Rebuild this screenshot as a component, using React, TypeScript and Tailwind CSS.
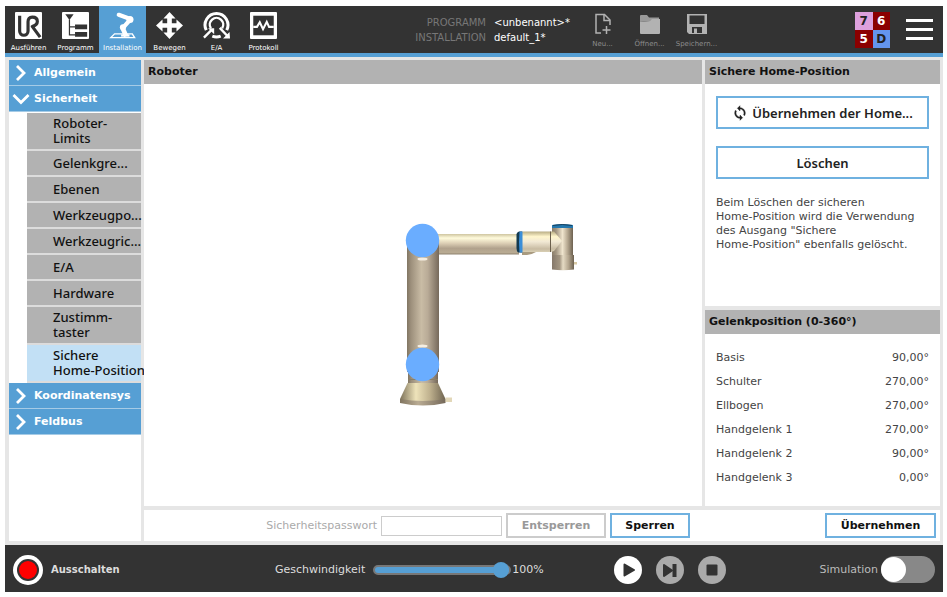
import type { ReactNode } from "react";

const tabs: { label: string; icon: ReactNode; active?: boolean }[] = [
  {
    label: "Ausführen",
    icon: (
      <>
        <rect width="29" height="29" rx="1" fill="#fff" />
        <path
          d="M5 4V20.5A4.5 4.5 0 0 0 14 20.5V10.5Q14 5.5 18.5 5.5Q24 5.5 24 10.2Q24 14 18.5 15.5L27 27"
          fill="none"
          stroke="#333"
          strokeWidth="3.4"
          strokeLinejoin="round"
        />
      </>
    ),
  },
  {
    label: "Programm",
    icon: (
      <>
        <rect width="29" height="29" rx="1" fill="#fff" />
        <path d="M3.5 2.5H12.5L8 8.5z" fill="#333" />
        <path d="M8 8V24.5H14M8 16H14" fill="none" stroke="#333" strokeWidth="1.3" />
        <path d="M14 13.5H27V18.5H14zM14 21.5H27V26.5H14z" fill="#333" />
      </>
    ),
  },
  {
    label: "Installation",
    active: true,
    icon: (
      <>
        <path d="M6 23.5H25L27.5 27.5H2z" fill="none" stroke="#fff" strokeWidth="1.5" />
        <path d="M10.5 3L20 6.5" stroke="#fff" strokeWidth="4.5" strokeLinecap="round" />
        <path d="M23 8L15 17" stroke="#fff" strokeWidth="4.5" strokeLinecap="round" />
        <path d="M14.5 17L18.5 26" stroke="#fff" strokeWidth="5" />
        <circle cx="22.5" cy="8" r="3.8" fill="#fff" />
        <circle cx="15" cy="16.5" r="3.3" fill="#fff" />
        <path d="M13 24H22V26.5H13z" fill="#fff" />
      </>
    ),
  },
  {
    label: "Bewegen",
    icon: (
      <path
        d="M14.5 0L21 7H17V12H22V8L29 14.5L22 21V17H17V22H21L14.5 29L8 22H12V17H7V21L0 14.5L7 8V12H12V7H8z"
        fill="#fff"
      />
    ),
  },
  {
    label: "E/A",
    icon: (
      <>
        <path
          d="M3.5 19.5A12.3 12.3 0 1 1 25.5 19.5M10 26a12 12 0 0 0 9 0"
          fill="none"
          stroke="#fff"
          strokeWidth="3.2"
        />
        <path d="M8.5 17.5A7.2 7.2 0 1 1 20.5 17.5" fill="none" stroke="#fff" strokeWidth="2.6" />
        <path d="M1 27.5L9 19.5M18 17L26 25.5" stroke="#fff" strokeWidth="2.6" />
        <path d="M5.5 17.5H12V24zM29 28.5H21.5L28.5 21.5z" fill="#fff" />
      </>
    ),
  },
  {
    label: "Protokoll",
    icon: (
      <>
        <rect width="29" height="29" rx="1" fill="#fff" />
        <rect x="3.5" y="4" width="22" height="21" fill="#333" />
        <path
          d="M3.5 16H7.5L10.5 11L14 18.5L18 10.5L20.5 16H25.5"
          fill="none"
          stroke="#fff"
          strokeWidth="2.2"
        />
      </>
    ),
  },
];

const safetyItems = [
  { label: "Roboter-\nLimits", tall: true },
  { label: "Gelenkgre..." },
  { label: "Ebenen" },
  { label: "Werkzeugpo..." },
  { label: "Werkzeugric..." },
  { label: "E/A" },
  { label: "Hardware" },
  { label: "Zustimm-\ntaster", tall: true },
  { label: "Sichere\nHome-Position", tall: true, active: true },
];

const joints = [
  ["Basis", "90,00°"],
  ["Schulter", "270,00°"],
  ["Ellbogen", "270,00°"],
  ["Handgelenk 1", "270,00°"],
  ["Handgelenk 2", "90,00°"],
  ["Handgelenk 3", "0,00°"],
];

function NavGroup({ label, open = false }: { label: string; open?: boolean }) {
  return (
    <button
      aria-expanded={open}
      className="flex h-[26px] w-full items-center border-b border-[#a5cbe6] bg-[#569fd4] pl-[3px] text-left font-bold text-white"
    >
      <svg viewBox="0 0 18 18" className="mr-1 size-[18px] shrink-0" fill="none" stroke="#fff" strokeWidth="2.8">
        <path d={open ? "M1.5 5L9 12.5L16.5 5" : "M5 2L12 9L5 16"} />
      </svg>
      {label}
    </button>
  );
}

function PanelTitle({ children }: { children: ReactNode }) {
  return (
    <h2 className="flex h-6 shrink-0 items-center bg-[#b2b2b2] pl-1 font-bold text-[#111]">{children}</h2>
  );
}

function FileButton({ label, children }: { label: string; children: ReactNode }) {
  return (
    <button disabled className="flex w-[47px] flex-col items-center text-[7px] leading-[10px] text-[#8c8c8c]">
      <svg viewBox="0 0 22 22" className="mb-1 size-[22px]">
        {children}
      </svg>
      {label}
    </button>
  );
}

function RobotView() {
  return (
    <svg viewBox="144 84 558 422" className="h-full w-full" role="img" aria-label="Roboter">
      <defs>
        <linearGradient id="upright">
          <stop offset="0" stopColor="#817663" />
          <stop offset="0.12" stopColor="#9c8f7b" />
          <stop offset="0.45" stopColor="#c9bca5" />
          <stop offset="0.65" stopColor="#b9ab97" />
          <stop offset="1" stopColor="#76695b" />
        </linearGradient>
        <linearGradient id="forearm" x2="0" y2="1">
          <stop offset="0" stopColor="#cfc5a0" />
          <stop offset="0.2" stopColor="#fffbdc" />
          <stop offset="0.45" stopColor="#dccfb5" />
          <stop offset="0.7" stopColor="#b0a18c" />
          <stop offset="0.9" stopColor="#b9ab93" />
          <stop offset="1" stopColor="#8f836f" />
        </linearGradient>
        <linearGradient id="wrist" x2="0" y2="1">
          <stop offset="0" stopColor="#b9ad84" />
          <stop offset="0.25" stopColor="#fff6cd" />
          <stop offset="0.5" stopColor="#f1e8d4" />
          <stop offset="0.85" stopColor="#c8bba2" />
          <stop offset="1" stopColor="#d9cfb4" />
        </linearGradient>
        <linearGradient id="base">
          <stop offset="0" stopColor="#7d7259" />
          <stop offset="0.35" stopColor="#eee3ba" />
          <stop offset="0.65" stopColor="#c0b28f" />
          <stop offset="1" stopColor="#6e6350" />
        </linearGradient>
        <linearGradient id="rim">
          <stop offset="0" stopColor="#80745f" />
          <stop offset="0.4" stopColor="#b9ab93" />
          <stop offset="1" stopColor="#75695a" />
        </linearGradient>
        <linearGradient id="tool">
          <stop offset="0" stopColor="#8a7d69" />
          <stop offset="0.2" stopColor="#a39682" />
          <stop offset="0.5" stopColor="#efe4cd" />
          <stop offset="0.75" stopColor="#b4a68f" />
          <stop offset="1" stopColor="#6d6150" />
        </linearGradient>
        <linearGradient id="flange">
          <stop offset="0" stopColor="#85786a" />
          <stop offset="0.35" stopColor="#a39682" />
          <stop offset="0.5" stopColor="#e6dbc4" />
          <stop offset="0.75" stopColor="#b4a68f" />
          <stop offset="1" stopColor="#6d6150" />
        </linearGradient>
      </defs>
      <path d="M437 234H519V254.5H437z" fill="url(#forearm)" />
      <path d="M522 252H536Q531 255 527 255H522z" fill="#a99b80" />
      <path d="M522 231.5H551V252H522z" fill="url(#wrist)" />
      <path d="M516.5 234Q517 232 519 231.5H522V252.5H518Q516.5 251 516.5 248z" fill="#12394f" />
      <path d="M519.5 231.5H522.5V252.5H519.5Q518.5 242 519.5 231.5z" fill="#3b8ed8" />
      <path d="M552 227H573V255H552z" fill="url(#tool)" />
      <path d="M551 231.5H554L562 241L554 251L551 252z" fill="url(#wrist)" />
      <path d="M550.5 231.5V252" stroke="#6b5f4c" />
      <path d="M552 255H574V269.5Q563 271 552 269.5z" fill="url(#flange)" />
      <path d="M552 225Q562 223 573 225V228H552z" fill="#2477ad" />
      <path d="M553 225.5Q562 223.5 572 225.5" fill="none" stroke="#17415f" />
      <path d="M574 262H577V264.5H574z" fill="#d8c9a5" />
      <path d="M407 240H439V372H407z" fill="url(#upright)" />
      <ellipse cx="422.5" cy="259" rx="5" ry="1.5" fill="#f5eee2" />
      <ellipse cx="422.5" cy="346" rx="5" ry="1.5" fill="#f5eee2" />
      <path d="M408 366H438V384H408z" fill="url(#upright)" />
      <path d="M408 379.5H438" stroke="#8b7f66" />
      <path d="M407.5 383H438L445.5 399V402H400V399z" fill="url(#base)" />
      <path d="M400 399Q423 403 445.5 399V403Q423 408 400 403z" fill="url(#rim)" />
      <path d="M445.5 397.5H452V402H445.5z" fill="#e2d7b8" />
      <circle cx="422.5" cy="240.5" r="16.7" fill="#6aadff" />
      <circle cx="422.5" cy="364.5" r="16.7" fill="#6aadff" />
    </svg>
  );
}

export default function App() {
  return (
    <div className="flex h-screen flex-col bg-white pt-[6px] pr-1 pb-[5px] pl-[5px] font-['DejaVu_Sans',sans-serif] text-[11px] leading-[14px] text-[#444]">
      <header className="flex h-[51px] shrink-0 border-b-4 border-[#569fd4] bg-[#333] text-white">
        <nav className="flex">
          {tabs.map((tab) => (
            <button
              key={tab.label}
              className={`flex w-[47px] flex-col items-center pt-[6px] text-[7px] leading-[10px] ${tab.active ? "bg-[#569fd4]" : ""}`}
            >
              <svg viewBox="0 0 29 29" className="mb-1 size-[29px]">
                {tab.icon}
              </svg>
              {tab.label}
            </button>
          ))}
        </nav>
        <dl className="ml-auto grid grid-cols-[auto_auto] content-center gap-x-2 text-[10px] leading-[15px]">
          <dt className="text-right text-[#777]">PROGRAMM</dt>
          <dd>&lt;unbenannt&gt;*</dd>
          <dt className="text-right text-[#777]">INSTALLATION</dt>
          <dd>default_1*</dd>
        </dl>
        <div className="ml-[9px] flex items-start pt-[7px]">
          <FileButton label="Neu...">
            <path d="M9 20H4V1.5H12.5L18 7V12" fill="none" stroke="#b2b2b2" strokeWidth="1.5" />
            <path d="M12 1.5V7.5H18M14.5 13V21M10.5 17H18.5" fill="none" stroke="#b2b2b2" strokeWidth="1.5" />
          </FileButton>
          <FileButton label="Öffnen...">
            <path d="M1 3Q1 2 2 2H8L10 4.5H20V7L1 9z" fill="#999" />
            <path d="M1 9L11 8L13 6H21V20Q21 21 20 21H2Q1 21 1 20z" fill="#b2b2b2" />
          </FileButton>
          <FileButton label="Speichern...">
            <path
              fillRule="evenodd"
              d="M1 1H21V21H3L1 19zM3.5 2.5V11H18.5V2.5zM6 14V20H16V14zM8 15.5H11V20H8z"
              fill="#b2b2b2"
            />
          </FileButton>
        </div>
        <div className="mt-[6px] ml-[135px] grid size-[35px] shrink-0 grid-cols-2 self-start text-center text-xs leading-[18px] font-bold">
          <span className="bg-[#dda0dd] text-[#222]">7</span>
          <span className="bg-[#8b0000]">6</span>
          <span className="bg-[#8b0000]">5</span>
          <span className="bg-[#6495ed] text-[#222]">D</span>
        </div>
        <button aria-label="Menü" className="mr-[10px] ml-4 flex w-[27px] flex-col justify-center gap-[6px]">
          <span className="h-[3px] w-full bg-white" />
          <span className="h-[3px] w-full bg-white" />
          <span className="h-[3px] w-full bg-white" />
        </button>
      </header>

      <div className="flex min-h-0 flex-1 gap-[3px] bg-[#e6e6e6] pt-[3px] pr-[3px] pb-1 pl-1">
        <aside className="w-[132px] shrink-0 bg-white">
          <NavGroup label="Allgemein" />
          <NavGroup label="Sicherheit" open />
          <ul className="ml-[18px] pt-px font-['Noto_Sans',sans-serif] text-[13px] font-medium">
            {safetyItems.map((item) => (
              <li key={item.label}>
                <button
                  className={`flex w-full items-center border-b-2 border-[#dcdcdc] pl-[26px] text-left leading-[15px] whitespace-pre text-[#111] ${item.tall ? "h-[38px]" : "h-[26px]"} ${item.active ? "bg-[#c2e0f5]" : "bg-[#b2b2b2]"}`}
                >
                  {item.label}
                </button>
              </li>
            ))}
          </ul>
          <NavGroup label="Koordinatensys" />
          <NavGroup label="Feldbus" />
        </aside>

        <div className="flex min-w-0 flex-1 flex-col gap-1">
          <div className="flex min-h-0 flex-1 gap-[3px]">
            <main className="flex min-w-0 flex-1 flex-col bg-white">
              <PanelTitle>Roboter</PanelTitle>
              <div className="min-h-0 flex-1">
                <RobotView />
              </div>
            </main>
            <div className="flex w-[235px] shrink-0 flex-col gap-1">
              <section className="flex flex-1 flex-col bg-white">
                <PanelTitle>Sichere Home-Position</PanelTitle>
                <div className="flex flex-col gap-[17px] px-[11px] pt-3">
                  <button className="flex h-[33px] items-center justify-center gap-1 border-2 border-[#6fb1e0] font-['Noto_Sans',sans-serif] text-[13px] font-semibold text-[#222]">
                    <svg viewBox="0 0 24 24" className="size-4" fill="#222" stroke="#222" strokeWidth="0.6">
                      <path d="M12 4V1L8 5l4 4V6c3.31 0 6 2.69 6 6 0 1.01-.25 1.97-.7 2.8l1.46 1.46A7.93 7.93 0 0 0 20 12c0-4.42-3.58-8-8-8zm0 14c-3.31 0-6-2.69-6-6 0-1.01.25-1.97.7-2.8L5.24 7.74A7.93 7.93 0 0 0 4 12c0 4.42 3.58 8 8 8v3l4-4-4-4v3z" />
                    </svg>
                    Übernehmen der Home...
                  </button>
                  <button className="h-[33px] border-2 border-[#6fb1e0] font-['Noto_Sans',sans-serif] text-[13px] font-semibold text-[#222]">
                    Löschen
                  </button>
                  <p>
                    Beim Löschen der sicheren
                    <br />
                    Home-Position wird die Verwendung
                    <br />
                    des Ausgang "Sichere
                    <br />
                    Home-Position" ebenfalls gelöscht.
                  </p>
                </div>
              </section>
              <section className="flex h-[196px] shrink-0 flex-col bg-white">
                <PanelTitle>Gelenkposition (0-360°)</PanelTitle>
                <table className="mx-[11px] mt-3">
                  <tbody>
                    {joints.map(([name, value]) => (
                      <tr key={name} className="h-6">
                        <th scope="row" className="text-left font-normal">
                          {name}
                        </th>
                        <td className="text-right">{value}</td>
                      </tr>
                    ))}
                  </tbody>
                </table>
              </section>
            </div>
          </div>

          <form className="flex h-[31px] shrink-0 items-center bg-white" onSubmit={(e) => e.preventDefault()}>
            <div className="flex flex-1 items-center justify-end gap-1 pr-3">
              <label htmlFor="password" className="text-[#aaa]">
                Sicherheitspasswort
              </label>
              <input id="password" type="password" disabled className="h-5 w-[121px] border border-[#ccc] bg-white" />
              <button type="button" disabled className="h-[25px] w-[100px] border-2 border-[#ccc] font-bold text-[#999]">
                Entsperren
              </button>
              <button type="button" className="h-[25px] w-20 border-2 border-[#6fb1e0] font-bold text-[#111]">
                Sperren
              </button>
            </div>
            <div className="flex w-[238px] justify-end pr-1">
              <button className="h-[25px] w-[111px] border-2 border-[#6fb1e0] font-bold text-[#111]">Übernehmen</button>
            </div>
          </form>
        </div>
      </div>

      <footer className="flex h-[47px] shrink-0 items-center bg-[#333] pt-[2px] text-[#ddd]">
        <button className="flex w-[270px] items-center gap-2 pl-2 text-[10px] font-bold">
          <svg viewBox="0 0 30 30" className="size-[30px]">
            <circle cx="15" cy="15" r="15" fill="#fff" />
            <circle cx="15" cy="15" r="11" fill="#333" />
            <circle cx="15" cy="15" r="9" fill="#f00" />
          </svg>
          Ausschalten
        </button>
        <label htmlFor="speed" className="mr-2">
          Geschwindigkeit
        </label>
        <input
          id="speed"
          type="range"
          min="0"
          max="100"
          defaultValue="100"
          className="mr-px h-4 w-[138px] appearance-none bg-transparent [&::-webkit-slider-runnable-track]:h-[10px] [&::-webkit-slider-runnable-track]:rounded-full [&::-webkit-slider-runnable-track]:border-2 [&::-webkit-slider-runnable-track]:border-[#777] [&::-webkit-slider-runnable-track]:bg-[#569fd4] [&::-webkit-slider-thumb]:mt-[-5px] [&::-webkit-slider-thumb]:size-4 [&::-webkit-slider-thumb]:appearance-none [&::-webkit-slider-thumb]:rounded-full [&::-webkit-slider-thumb]:bg-[#569fd4]"
        />
        <output htmlFor="speed">100%</output>
        <div className="ml-[70px] flex gap-[14px]">
          <button aria-label="Abspielen">
            <svg viewBox="0 0 28 28" className="size-7">
              <circle cx="14" cy="14" r="14" fill="#fff" />
              <path d="M10.5 8.5L20 14L10.5 19.5z" fill="#333" stroke="#333" strokeWidth="2" strokeLinejoin="round" />
            </svg>
          </button>
          <button aria-label="Schritt" disabled>
            <svg viewBox="0 0 28 28" className="size-7">
              <circle cx="14" cy="14" r="14" fill="#aaa" />
              <path d="M8 9L16 14.5L8 20z" fill="#333" stroke="#333" strokeWidth="2" strokeLinejoin="round" />
              <path d="M16.5 8H20.5V21H16.5z" fill="#333" />
            </svg>
          </button>
          <button aria-label="Stopp" disabled>
            <svg viewBox="0 0 28 28" className="size-7">
              <circle cx="14" cy="14" r="14" fill="#aaa" />
              <rect x="8.5" y="8.5" width="11" height="11" rx="1" fill="#333" />
            </svg>
          </button>
        </div>
        <label className="mr-2 ml-auto flex items-center gap-[3px] text-[#bbb]">
          Simulation
          <input
            type="checkbox"
            role="switch"
            className="h-[27px] w-[54px] appearance-none rounded-full bg-[#888] before:block before:size-[25px] before:translate-y-px before:rounded-full before:bg-white checked:before:translate-x-7"
          />
        </label>
      </footer>
    </div>
  );
}
